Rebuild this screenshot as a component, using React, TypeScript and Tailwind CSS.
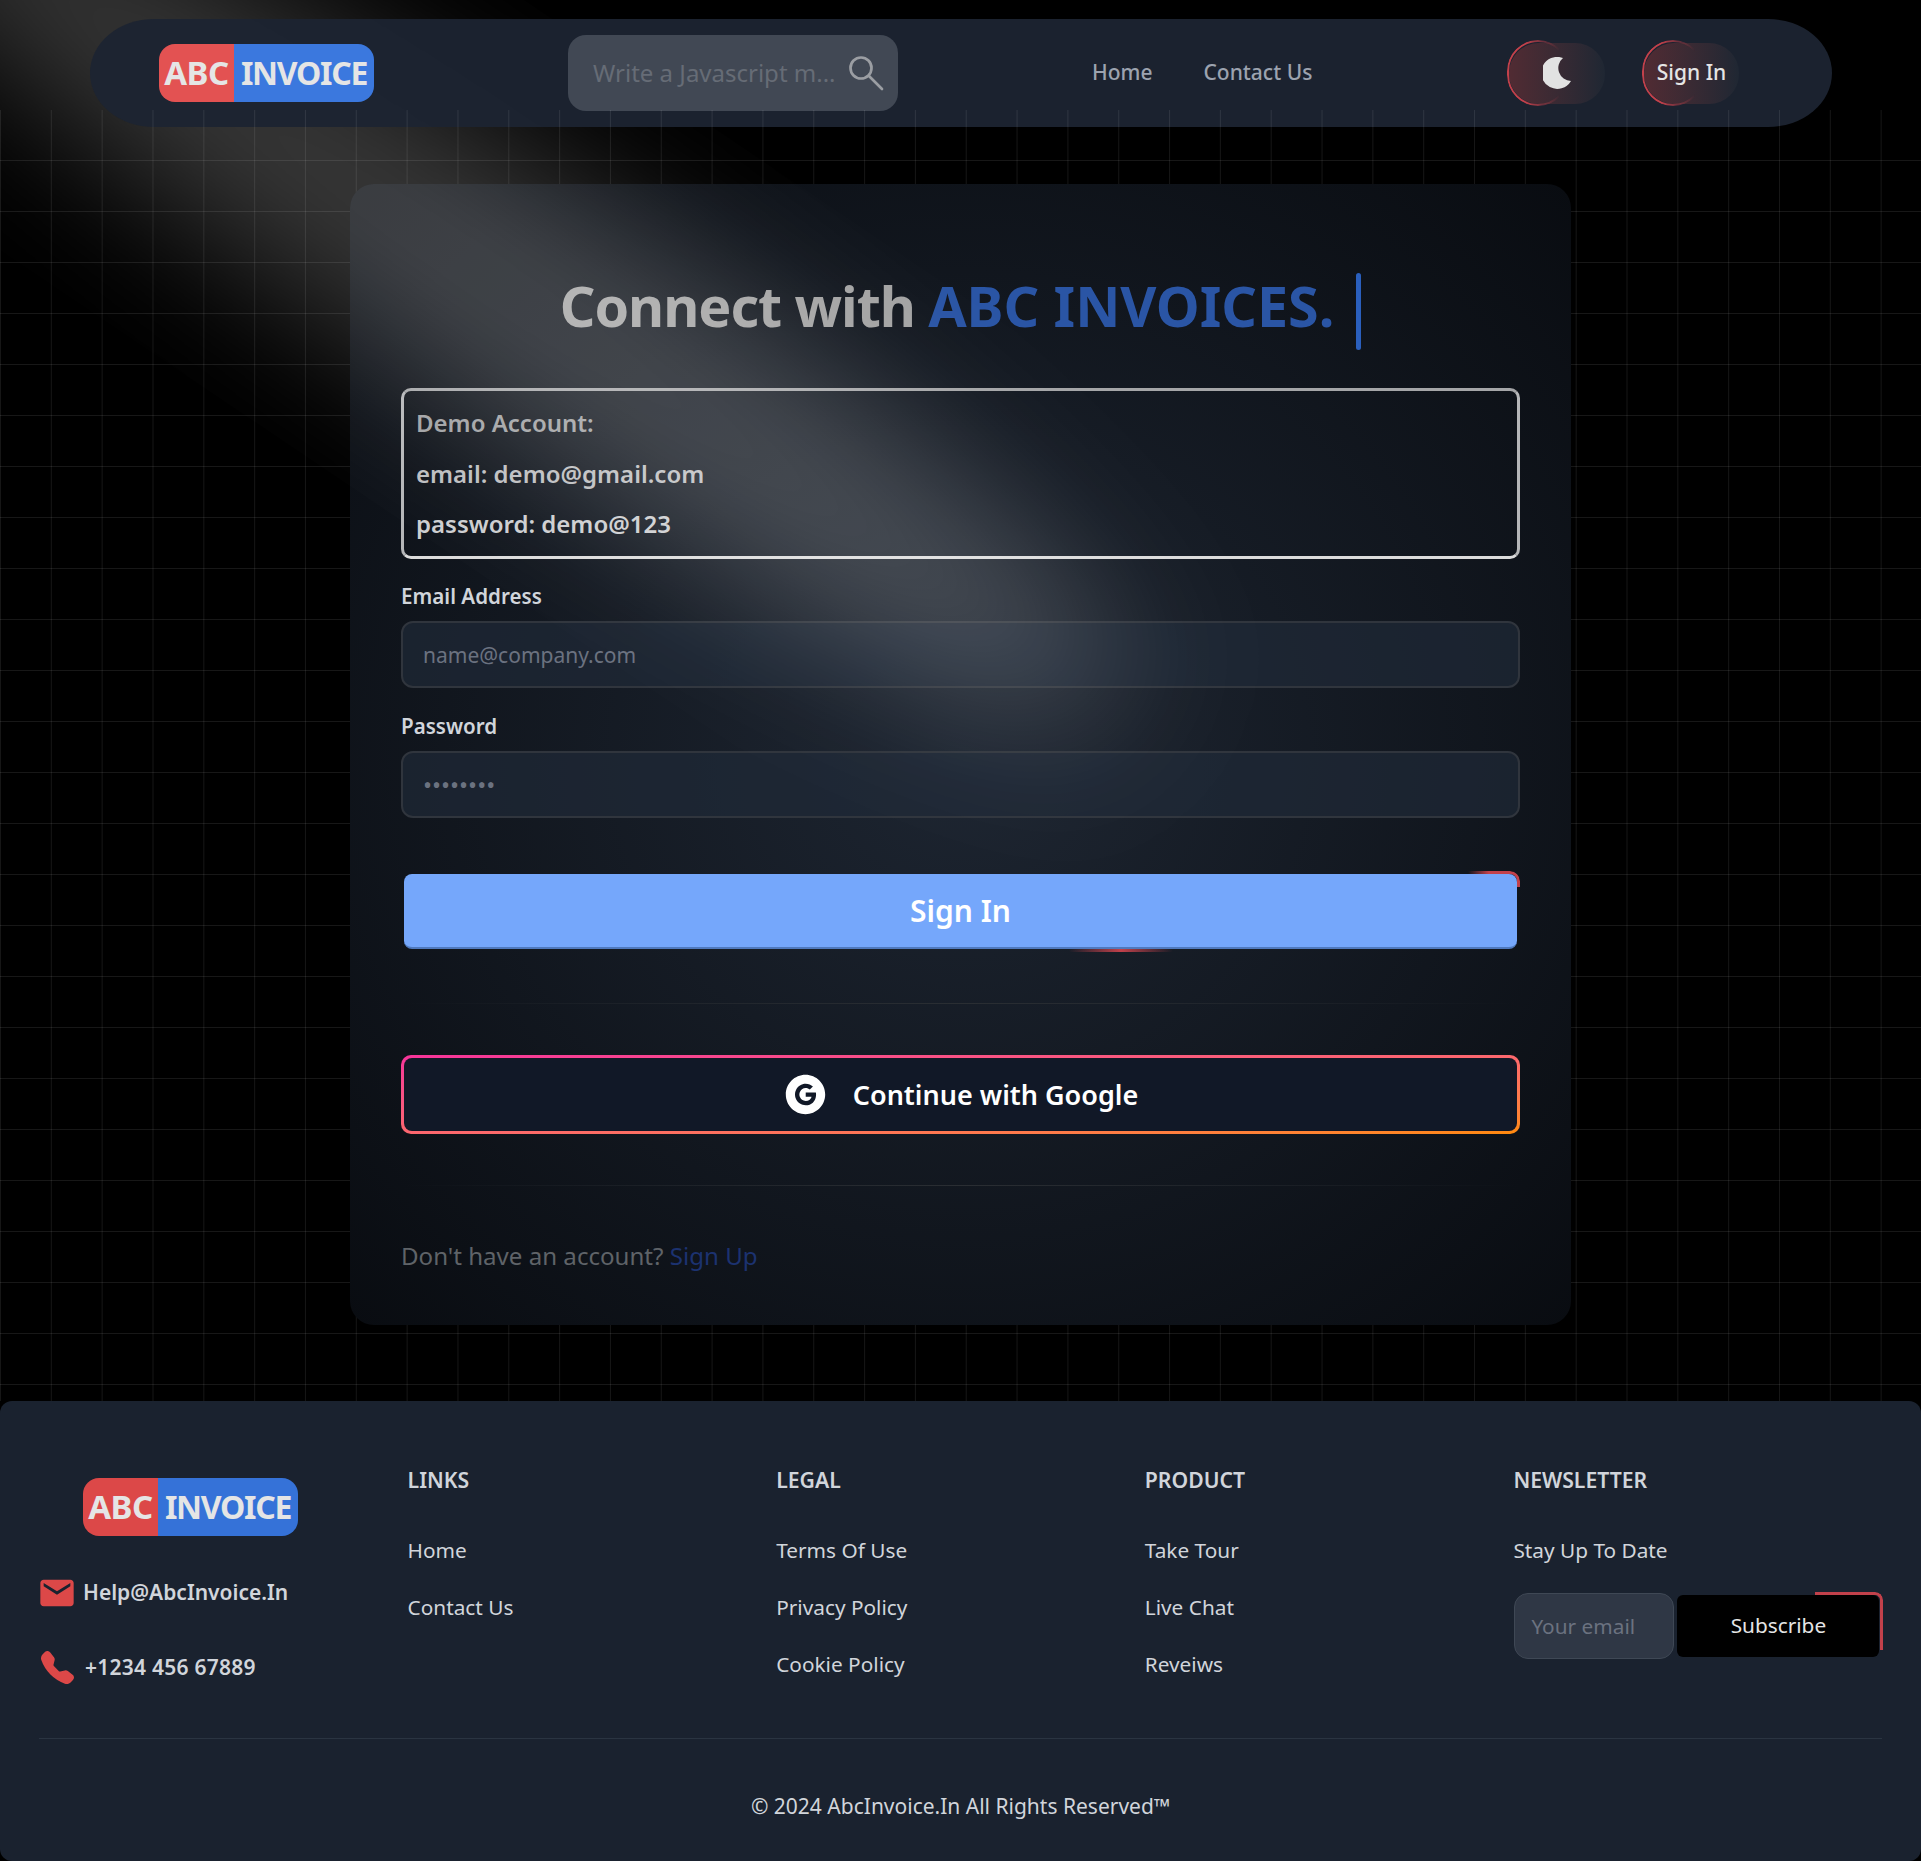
import { AiFillGoogleCircle } from "react-icons/ai";
import { BsFillTelephoneFill } from "react-icons/bs";
import { MdEmail } from "react-icons/md";

const footerColumns = [
  { title: "LINKS", items: ["Home", "Contact Us"] },
  { title: "LEGAL", items: ["Terms Of Use", "Privacy Policy", "Cookie Policy"] },
  { title: "PRODUCT", items: ["Take Tour", "Live Chat", "Reveiws"] },
];

function Logo({ red, blue }: { red: string; blue: string }) {
  return (
    <div className="flex h-[58px] w-[215px] overflow-hidden rounded-[16px] font-bold text-[#e5e5e5]">
      <span className={`flex w-[75px] items-center justify-center text-[33px] tracking-[-0.5px] ${red}`}>ABC</span>
      <span className={`flex flex-1 items-center justify-center text-[32px] tracking-[-1.3px] ${blue}`}>INVOICE</span>
    </div>
  );
}

function Spotlight({ className }: { className: string }) {
  return (
    <svg
      className={`pointer-events-none absolute ${className}`}
      width="1921"
      height="1400"
      viewBox="0 0 1921 1400"
      fill="none"
    >
      <defs>
        <filter id="spot-blur" x="-50%" y="-50%" width="200%" height="200%">
          <feGaussianBlur stdDeviation="72" />
        </filter>
      </defs>
      <ellipse
        cx="480"
        cy="272"
        rx="770"
        ry="125"
        transform="rotate(34 480 272)"
        fill="#ffffff"
        fillOpacity="0.215"
        filter="url(#spot-blur)"
      />
    </svg>
  );
}

function GlowButton({ children, width }: { children: React.ReactNode; width: string }) {
  return (
    <div className={`relative flex h-[66px] items-center justify-end ${width}`}>
      <div className="absolute inset-y-0 left-0 w-[62px] rounded-[33px] border-[2.5px] border-[#c2414b] [mask-image:linear-gradient(to_right,black_30%,transparent_85%)]" />
      <button className="flex h-[61px] w-[calc(100%-2px)] items-center justify-center rounded-[30px] bg-gradient-to-r from-[#512b33] to-[#1f2733] text-[#e5e5e5]">
        {children}
      </button>
    </div>
  );
}

function Field({ label, placeholder, dots }: { label: string; placeholder: string; dots?: boolean }) {
  return (
    <div>
      <label className="block text-[20.6px] leading-[28px] font-semibold text-[#d1d5db]">{label}</label>
      <input
        readOnly
        placeholder={placeholder}
        className={`mt-[11px] block h-[67px] w-full rounded-[12px] border-2 border-[#30353d] bg-[#1f2937]/70 px-[20px] placeholder:text-[#6b7280] ${dots ? "text-[24px]" : "text-[21px]"}`}
      />
    </div>
  );
}

export default function App() {
  return (
    <div className="relative min-h-[1861px] overflow-hidden bg-black font-['Noto_Sans',sans-serif]">
      <Spotlight className="top-0 left-0" />

      <header className="relative ml-[90px] flex h-[108px] w-[1742px] translate-y-[19px] items-center rounded-[64px/54px] bg-[#1c2431]/95 pl-[69px]">
        <Logo red="bg-[#e35252]" blue="bg-[#3b78de]" />
        <div className="ml-[194px] flex h-[76px] w-[330px] items-center justify-between rounded-[18px] bg-[#414854] pr-[14px] pl-[25px]">
          <span className="text-[24px] whitespace-nowrap text-[#666c76]">Write a Javascript m...</span>
          <svg className="size-[36px] shrink-0" viewBox="0 0 36 36" fill="none" stroke="#9b9ea3" strokeWidth="2.7" strokeLinecap="round">
            <circle cx="13" cy="13" r="10.5" />
            <line x1="21" y1="21" x2="34" y2="34" />
          </svg>
        </div>
        <nav className="ml-[194px] flex w-[222px] gap-[51px] text-[21px] font-medium text-[#9ca3af]">
          <a>Home</a>
          <a>Contact Us</a>
        </nav>
        <div className="ml-[193px] flex items-center gap-[37px]">
          <GlowButton width="w-[98px]">
            <svg className="h-[32px] w-[29px]" viewBox="0 0 29 32" fill="#e2e2e2">
              <path d="M20 1A16 16 0 1 0 28 24A13 13 0 0 1 20 1Z" />
            </svg>
          </GlowButton>
          <GlowButton width="w-[97px]">
            <span className="text-[21px] font-medium">Sign In</span>
          </GlowButton>
        </div>
      </header>

      <div className="pointer-events-none absolute top-[110px] left-0 h-[1291px] w-full bg-[linear-gradient(to_right,rgba(255,255,255,0.085)_1px,transparent_1px),linear-gradient(to_bottom,rgba(255,255,255,0.09)_1px,transparent_1px)] bg-[size:50.83px_51px] bg-[position:0_50px]" />

      <main className="relative mx-auto mt-[76px] h-[1141px] w-[1221px] overflow-hidden rounded-[24px] bg-[radial-gradient(ellipse_at_center,#1d2531,#090c11)] px-[51px] pt-[84px]">
        <h1 className="flex h-[86px] items-center justify-center text-[55.6px] font-bold text-[#a3a3a3]">
          <span className="-translate-y-[5px]">
            <span className="tracking-[-1.05px]">Connect with </span>
            <span className="tracking-[-0.05px] text-[#2a55a5]">ABC INVOICES.</span>
          </span>
          <span className="ml-[22px] h-[77px] w-[5px] rounded-full bg-[#2a5fbd]" />
        </h1>

        <div className="mt-[34px] h-[171px] rounded-[10px] border-[3px] border-x-[#b5b6b8] border-t-[#a5a6a8] border-b-[#dcdcdc] px-[12px] py-[7px] text-[24px] leading-[50.5px] font-semibold">
          <p className="text-[#a0a1a3]">Demo Account:</p>
          <p className="text-[#bdbec0]">email: demo@gmail.com</p>
          <p className="text-[#cdced0]">password: demo@123</p>
        </div>

        <div className="mt-[23px] flex flex-col gap-[24px]">
          <Field label="Email Address" placeholder="name@company.com" />
          <Field label="Password" placeholder="••••••••" dots />
        </div>

        <div className="relative mt-[53px] h-[81px] p-[3px]">
          <div className="absolute top-0 right-0 h-[16px] w-[52px] rounded-tr-[10px] border-t-[3px] border-r-[3px] border-[#c2414b] [mask-image:linear-gradient(to_right,transparent,black_40%)]" />
          <div className="absolute bottom-0 left-[668px] h-[3px] w-[104px] bg-gradient-to-r from-transparent via-[#c2414b] to-transparent" />
          <button className="relative h-full w-full rounded-[8px] border-b-2 border-[#4f79bd] bg-[#75a7fb] text-[30px] font-semibold text-white">
            Sign In
          </button>
        </div>

        <div className="mt-[51px] h-px bg-gradient-to-r from-transparent via-[#2a2e33] to-transparent" />

        <div className="mt-[51px] h-[79px] rounded-[10px] bg-gradient-to-br from-pink-500 to-orange-400 p-[3px]">
          <button className="flex h-full w-full items-center justify-center gap-[25px] rounded-[8px] bg-[#111827] text-[27px] font-semibold text-white">
            <AiFillGoogleCircle className="size-[45px]" />
            <span className="translate-y-[1px]">Continue with Google</span>
          </button>
        </div>

        <div className="mt-[51px] h-px bg-gradient-to-r from-transparent via-[#2a2e33] to-transparent" />

        <p className="mt-[52px] text-[24.1px] text-[#5f6368]">
          Don&apos;t have an account? <a className="text-[#1c3270]">Sign Up</a>
        </p>

        <Spotlight className="top-[-184px] left-[-350px]" />
      </main>

      <footer className="relative mt-[76px] h-[460px] rounded-[12px] bg-[#1a222f] px-[39px] pt-[64px] text-[20.8px] text-[#d1d5db]">
        <div className="grid h-[274px] grid-cols-5 border-b border-[#2a3441]">
          <div>
            <div className="mt-[13px] ml-[44px]">
              <Logo red="bg-[#dc4848]" blue="bg-[#3572d8]" />
            </div>
            <div className="mt-[37px] flex items-center gap-[6px] text-[21px] font-semibold">
              <MdEmail className="-ml-[2px] size-[40px] text-[#dc4848]" />
              Help@AbcInvoice.In
            </div>
            <div className="mt-[38px] flex items-center gap-[11px] text-[21px] font-semibold tracking-[0.25px]">
              <BsFillTelephoneFill className="ml-[2px] size-[33px] text-[#dc4848]" />
              +1234 456 67889
            </div>
          </div>

          {footerColumns.map((col) => (
            <div key={col.title}>
              <h3 className="text-[21.2px] leading-[30px] font-semibold">{col.title}</h3>
              <ul className="mt-[40px] flex flex-col gap-[27px]">
                {col.items.map((item) => (
                  <li key={item} className="leading-[30px]">
                    {item}
                  </li>
                ))}
              </ul>
            </div>
          ))}

          <div>
            <h3 className="text-[21.2px] leading-[30px] font-semibold">NEWSLETTER</h3>
            <p className="mt-[40px] leading-[30px]">Stay Up To Date</p>
            <div className="mt-[28px] ml-px flex items-center gap-[3px]">
              <input
                readOnly
                placeholder="Your email"
                className="h-[66px] w-[160px] rounded-[14px] border border-[#3f4855] bg-[#2f3745] px-[16px] placeholder:text-[#6b7280]"
              />
              <div className="relative">
                <div className="absolute -top-[3px] -right-[4px] h-[58px] w-[68px] rounded-tr-[8px] border-t-[3px] border-r-[3px] border-[#c2414b] [mask-image:linear-gradient(to_bottom_left,black_55%,transparent_90%)]" />
                <button className="relative h-[62px] w-[202px] rounded-[6px] bg-black text-[#e5e5e5]">Subscribe</button>
              </div>
            </div>
          </div>
        </div>
        <p className="mt-[52px] text-center text-[21px]">© 2024 AbcInvoice.In All Rights Reserved™</p>
      </footer>
    </div>
  );
}
